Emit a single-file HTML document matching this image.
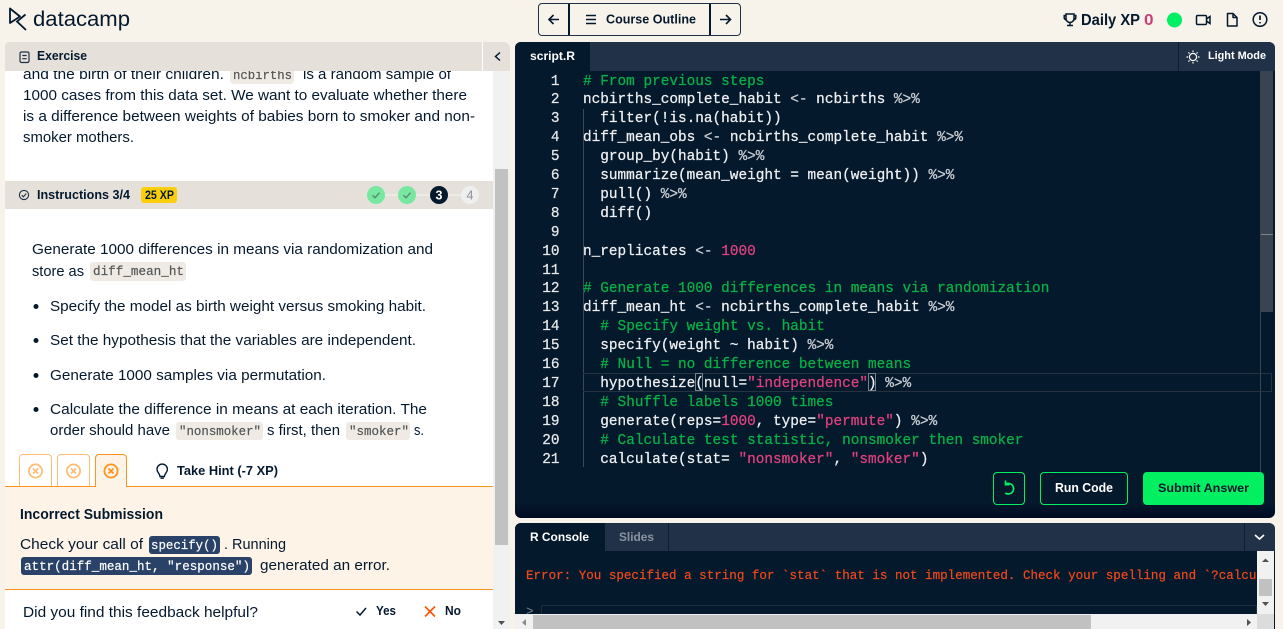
<!DOCTYPE html>
<html lang="en"><head><meta charset="utf-8"><title>DataCamp exercise</title>
<style>
html,body{margin:0;padding:0;width:1283px;height:629px;overflow:hidden;background:#f7f3eb}
body{position:relative;font-family:"Liberation Sans",sans-serif}
.b{position:absolute;box-sizing:border-box}
svg.o{position:absolute;left:0;top:0}
text{font-family:"Liberation Sans",sans-serif;fill:#05192d;font-size:15px}
text.h{font-weight:700;font-size:12.5px}
text.m{font-family:"Liberation Mono",monospace;font-size:12.5px;stroke-width:.2px}
pre{position:absolute;margin:0;font-family:"Liberation Mono",monospace}
.c{color:#06b045}.s{color:#e0417f}.o2{color:#c9ced3}
#code{left:583px;top:72.5px;font-size:14.4px;line-height:18.9px;color:#eef0f2;-webkit-text-stroke:.25px}
#nums{left:530px;top:72.5px;width:29.5px;text-align:right;font-size:14.4px;line-height:18.9px;color:#e6e8ea;-webkit-text-stroke:.25px}
</style></head><body>

<!-- left panel -->
<div class="b" style="left:5px;top:42px;width:505px;height:587px;background:#fff;border-radius:4px 6px 0 0"></div>
<div class="b" style="left:5px;top:42px;width:477px;height:29px;background:#e5e1da;border-radius:4px 0 0 0"></div>
<div class="b" style="left:483px;top:42px;width:27px;height:29px;background:#e5e1da;border-radius:0 6px 0 0"></div>
<div class="b" style="left:493px;top:71px;width:17px;height:558px;background:#f1f1f1"></div>
<div class="b" style="left:495px;top:169px;width:13px;height:376px;background:#c1c1c1"></div>
<div class="b" style="left:5px;top:181px;width:488px;height:28px;background:#e5e1da"></div>
<div class="b" style="left:230px;top:71px;width:64px;height:13px;background:#efebe4;border-radius:0 0 4px 4px"></div>
<div class="b" style="left:90px;top:262px;width:96px;height:19px;background:#efebe4;border-radius:3px"></div>
<div class="b" style="left:176px;top:422px;width:87px;height:18px;background:#efebe4;border-radius:3px"></div>
<div class="b" style="left:346px;top:422px;width:64px;height:18px;background:#efebe4;border-radius:3px"></div>
<div class="b" style="left:141px;top:187px;width:36px;height:16px;background:#fcce0d;border-radius:3px"></div>
<!-- feedback -->
<div class="b" style="left:5px;top:486px;width:488px;height:104px;background:#fef3e7;border-top:1px solid #ff931e;border-bottom:1px solid #ff931e"></div>
<div class="b" style="left:19px;top:454px;width:33px;height:32px;background:#fff;border:1px solid #ffbd78;border-bottom:0;border-radius:4px 4px 0 0"></div>
<div class="b" style="left:57px;top:454px;width:33px;height:32px;background:#fff;border:1px solid #ffbd78;border-bottom:0;border-radius:4px 4px 0 0"></div>
<div class="b" style="left:95px;top:454px;width:32px;height:33px;background:#fef3e7;border:1px solid #ff931e;border-bottom:0;border-radius:4px 4px 0 0"></div>
<div class="b" style="left:149px;top:536px;width:71px;height:18px;background:#2a4268;border-radius:3px"></div>
<div class="b" style="left:21px;top:557px;width:231px;height:18px;background:#2a4268;border-radius:3px"></div>

<!-- nav -->
<div class="b" style="left:538px;top:3px;width:203px;height:33px;border:1.5px solid #213147;border-radius:4px"></div>
<div class="b" style="left:568px;top:4px;width:2px;height:31px;background:#05192d"></div>
<div class="b" style="left:709px;top:4px;width:2px;height:31px;background:#05192d"></div>

<!-- editor -->
<div class="b" style="left:515px;top:42px;width:760px;height:476px;background:linear-gradient(#05192d 0,#05192d 460px,#000a22 476px);border-radius:6px;overflow:hidden">
  <div class="b" style="left:0;top:0;width:760px;height:29px;background:#213147"></div>
  <div class="b" style="left:0;top:0;width:75px;height:29px;background:#05192d"></div>
  <div class="b" style="left:663px;top:0;width:1px;height:29px;background:#0d1f35"></div>
  <div class="b" style="left:745px;top:29px;width:1px;height:401px;background:#3a4653"></div>
  <div class="b" style="left:745px;top:29px;width:13px;height:241px;background:#3a4450"></div>
  <div class="b" style="left:746px;top:192px;width:12px;height:1px;background:#7c858d"></div>
  <div class="b" style="left:68px;top:67px;width:1px;height:358px;background:#3c4a57"></div>
  <div class="b" style="left:68px;top:331px;width:689px;height:19px;border:1px solid #26323f;border-left:0"></div>
  <div class="b" style="left:180px;top:331px;width:8px;height:18px;border:1px solid #77838d"></div>
  <div class="b" style="left:353px;top:331px;width:8px;height:18px;border:1px solid #77838d"></div>
</div>
<pre id="nums">1
2
3
4
5
6
7
8
9
10
11
12
13
14
15
16
17
18
19
20
21</pre>
<pre id="code"><span class="c"># From previous steps</span>
ncbirths_complete_habit <span class="o2">&lt;-</span> ncbirths <span class="o2">%&gt;%</span>
  filter(!is.na(habit))
diff_mean_obs <span class="o2">&lt;-</span> ncbirths_complete_habit <span class="o2">%&gt;%</span>
  group_by(habit) <span class="o2">%&gt;%</span>
  summarize(mean_weight = mean(weight)) <span class="o2">%&gt;%</span>
  pull() <span class="o2">%&gt;%</span>
  diff()

n_replicates <span class="o2">&lt;-</span> <span class="s">1000</span>

<span class="c"># Generate 1000 differences in means via randomization</span>
diff_mean_ht <span class="o2">&lt;-</span> ncbirths_complete_habit <span class="o2">%&gt;%</span>
  <span class="c"># Specify weight vs. habit</span>
  specify(weight ~ habit) <span class="o2">%&gt;%</span>
  <span class="c"># Null = no difference between means</span>
  hypothesize(null=<span class="s">"independence"</span>) <span class="o2">%&gt;%</span>
  <span class="c"># Shuffle labels 1000 times</span>
  generate(reps=<span class="s">1000</span>, type=<span class="s">"permute"</span>) <span class="o2">%&gt;%</span>
  <span class="c"># Calculate test statistic, nonsmoker then smoker</span>
  calculate(stat= <span class="s">"nonsmoker"</span>, <span class="s">"smoker"</span>)</pre>
<div class="b" style="left:993px;top:472px;width:32px;height:33px;border:1px solid #03ef62;border-radius:4px"></div>
<div class="b" style="left:1040px;top:472px;width:88px;height:33px;border:1px solid #03ef62;border-radius:4px"></div>
<div class="b" style="left:1143px;top:472px;width:121px;height:33px;background:#03ef62;border-radius:4px"></div>

<!-- console -->
<div class="b" style="left:515px;top:523px;width:760px;height:106px;background:#05192d;border-radius:6px 6px 0 0;overflow:hidden">
  <div class="b" style="left:0;top:0;width:760px;height:28px;background:#213147"></div>
  <div class="b" style="left:0;top:0;width:90px;height:28px;background:#05192d"></div>
  <div class="b" style="left:153px;top:0;width:1px;height:28px;background:#0d1f35"></div>
  <div class="b" style="left:729px;top:0;width:1px;height:28px;background:#0d1f35"></div>
  <div class="b" style="left:26px;top:82px;width:716px;height:10px;border:1px solid #1f2c3b"></div>
</div>
<div class="b" style="left:526px;top:567px;width:731px;height:18px;overflow:hidden"><pre style="left:0;top:0;font-size:12.56px;line-height:18px;color:#f0491a;-webkit-text-stroke:.2px">Error: You specified a string for `stat` that is not implemented. Check your spelling and `?calculate`</pre></div>
<div class="b" style="left:1257px;top:551px;width:17px;height:63px;background:#f1f1f1"></div>
<div class="b" style="left:1259px;top:579px;width:13px;height:17px;background:#c1c1c1"></div>
<div class="b" style="left:515px;top:614px;width:742px;height:15px;background:#f1f1f1"></div>
<div class="b" style="left:533px;top:615px;width:558px;height:14px;background:#c1c1c1"></div>
<div class="b" style="left:1257px;top:614px;width:17px;height:15px;background:#dcdcdc"></div>

<svg class="o" width="1283" height="629" viewBox="0 0 1283 629" xmlns="http://www.w3.org/2000/svg">
 <!-- logo -->
 <g fill="none" stroke="#05192d" stroke-width="1.8">
  <path d="M10 8.5V23L20 16.5Z" stroke-linejoin="round"/>
  <path d="M25.5 14.5L17 21.5L26 30"/>
 </g>
 <text x="33" y="26" textLength="97" lengthAdjust="spacingAndGlyphs" style="font-size:21px;fill:#05192d">datacamp</text>

 <!-- nav icons -->
 <g fill="none" stroke="#05192d" stroke-width="1.6">
  <path d="M559 19.5H549M553.5 15L549 19.5L553.5 24"/>
  <path d="M586 15.5H596M586 19.5H596M586 23.5H596" stroke-width="1.4"/>
  <path d="M720 19.5H730.5M726 15L730.5 19.5L726 24"/>
 </g>
 <text class="h" x="606" y="23.5" textLength="90" lengthAdjust="spacingAndGlyphs">Course Outline</text>

 <!-- top right -->
 <g fill="none" stroke="#05192d" stroke-width="1.5">
  <path d="M1066 14H1074V18.5A4 4 0 0 1 1066 18.5ZM1066 15.5H1064.2V17A2.5 2.5 0 0 0 1066.6 20M1074 15.5H1075.8V17A2.5 2.5 0 0 1 1073.4 20M1070 22.5V25M1067 25.5H1073"/>
  <rect x="1196.5" y="15.5" width="10" height="9" rx="1.2"/>
  <path d="M1206.5 19L1210 16.5V23.5L1206.5 21"/>
  <path d="M1227.5 13.5H1233L1237 17.5V26H1227.5ZM1233 13.5V17.5H1237" stroke-linejoin="round"/>
  <circle cx="1260" cy="19.5" r="6.8"/>
 </g>
 <path d="M1260 15.5V20M1260 22V23.4" stroke="#05192d" stroke-width="1.7" fill="none"/>
 <text x="1081" y="25" textLength="59" lengthAdjust="spacingAndGlyphs" style="font-size:15.5px;font-weight:700">Daily XP</text>
 <text x="1144" y="25" textLength="9.5" lengthAdjust="spacingAndGlyphs" style="font-size:15.5px;font-weight:700;fill:#c83f78">0</text>
 <circle cx="1174.5" cy="20" r="7.5" fill="#03ef62"/>

 <!-- exercise header -->
 <g fill="none" stroke="#213147" stroke-width="1.2">
  <rect x="20" y="52" width="9" height="10.5" rx="1.5"/>
  <path d="M22.3 55.5H26.7M22.3 58.7H26.7"/>
 </g>
 <text class="h" x="37" y="60" textLength="50" lengthAdjust="spacingAndGlyphs">Exercise</text>
 <path d="M500 52.5L495.5 56.5L500 60.5" fill="none" stroke="#05192d" stroke-width="1.5"/>

 <!-- exercise text (first line clipped) -->
 <svg x="0" y="71" width="493" height="30" overflow="hidden">
  <text x="23" y="8" textLength="201" lengthAdjust="spacingAndGlyphs">and the birth of their children.</text>
  <text class="m" x="233" y="8" textLength="59" lengthAdjust="spacingAndGlyphs" style="fill:#555;stroke:#555">ncbirths</text>
  <text x="303" y="8" textLength="148" lengthAdjust="spacingAndGlyphs">is a random sample of</text>
 </svg>
 <text x="23" y="100" textLength="444" lengthAdjust="spacingAndGlyphs">1000 cases from this data set. We want to evaluate whether there</text>
 <text x="23" y="121" textLength="452" lengthAdjust="spacingAndGlyphs">is a difference between weights of babies born to smoker and non-</text>
 <text x="23" y="142" textLength="111" lengthAdjust="spacingAndGlyphs">smoker mothers.</text>

 <!-- instructions header -->
 <circle cx="24" cy="195" r="4.6" fill="none" stroke="#213147" stroke-width="1.1"/>
 <path d="M21.8 195.2L23.4 196.8L26.2 193.6" fill="none" stroke="#213147" stroke-width="1.1"/>
 <text class="h" x="37" y="199" textLength="93" lengthAdjust="spacingAndGlyphs">Instructions 3/4</text>
 <text class="h" x="145" y="199" textLength="29" lengthAdjust="spacingAndGlyphs" style="font-size:11.5px">25 XP</text>
 <path d="M384 195H461" stroke="#f3f1ec" stroke-width="1.2"/>
 <circle cx="376" cy="195" r="9" fill="#76e8a0"/>
 <circle cx="407" cy="195" r="9" fill="#76e8a0"/>
 <circle cx="439" cy="195" r="9" fill="#05192d"/>
 <circle cx="470" cy="195" r="9" fill="#efefef"/>
 <path d="M372.5 195.2L375 197.7L379.5 192.7M403.5 195.2L406 197.7L410.5 192.7" fill="none" stroke="#5a8a72" stroke-width="1.4"/>
 <text x="439" y="199.5" text-anchor="middle" style="font-size:12.5px;font-weight:700;fill:#fff">3</text>
 <text x="470" y="199.5" text-anchor="middle" style="font-size:12.5px;fill:#8c8f94">4</text>

 <!-- instructions -->
 <text x="32" y="254" textLength="401" lengthAdjust="spacingAndGlyphs">Generate 1000 differences in means via randomization and</text>
 <text x="32" y="276" textLength="52" lengthAdjust="spacingAndGlyphs">store as</text>
 <text class="m" x="93" y="275" textLength="91" lengthAdjust="spacingAndGlyphs" style="fill:#555;stroke:#555">diff_mean_ht</text>
 <g fill="#05192d"><circle cx="36" cy="306.5" r="2.5"/><circle cx="36" cy="340.5" r="2.5"/><circle cx="36" cy="375.5" r="2.5"/><circle cx="36" cy="409.5" r="2.5"/></g>
 <text x="50" y="311" textLength="376" lengthAdjust="spacingAndGlyphs">Specify the model as birth weight versus smoking habit.</text>
 <text x="50" y="345" textLength="366" lengthAdjust="spacingAndGlyphs">Set the hypothesis that the variables are independent.</text>
 <text x="50" y="380" textLength="276" lengthAdjust="spacingAndGlyphs">Generate 1000 samples via permutation.</text>
 <text x="50" y="414" textLength="377" lengthAdjust="spacingAndGlyphs">Calculate the difference in means at each iteration. The</text>
 <text x="50" y="435" textLength="120" lengthAdjust="spacingAndGlyphs">order should have</text>
 <text class="m" x="179" y="435" textLength="82" lengthAdjust="spacingAndGlyphs" style="fill:#555;stroke:#555">"nonsmoker"</text>
 <text x="267" y="435" textLength="73" lengthAdjust="spacingAndGlyphs">s first, then</text>
 <text class="m" x="349" y="435" textLength="60" lengthAdjust="spacingAndGlyphs" style="fill:#555;stroke:#555">"smoker"</text>
 <text x="414" y="435" textLength="10" lengthAdjust="spacingAndGlyphs">s.</text>

 <!-- attempt tabs -->
 <g fill="none" stroke="#ffbd78" stroke-width="1.8">
  <circle cx="35.5" cy="471" r="6.6"/><path d="M33 468.5L38 473.5M38 468.5L33 473.5"/>
  <circle cx="73.5" cy="471" r="6.6"/><path d="M71 468.5L76 473.5M76 468.5L71 473.5"/>
 </g>
 <g fill="none" stroke="#ff931e" stroke-width="1.8">
  <circle cx="111" cy="471" r="6.6"/><path d="M108.5 468.5L113.5 473.5M113.5 468.5L108.5 473.5"/>
 </g>
 <!-- hint -->
 <path d="M160 476.5C160 473.5 157 472.8 157 469.3A5.2 5.2 0 0 1 167.4 469.3C167.4 472.8 164.4 473.5 164.4 476.5ZM160.5 478.2H163.9" fill="none" stroke="#05192d" stroke-width="1.4"/>
 <text class="h" x="177" y="475" textLength="101" lengthAdjust="spacingAndGlyphs">Take Hint (-7 XP)</text>

 <!-- feedback -->
 <text x="20" y="519" textLength="143" lengthAdjust="spacingAndGlyphs" style="font-size:14.5px;font-weight:700">Incorrect Submission</text>
 <text x="20" y="549" textLength="123" lengthAdjust="spacingAndGlyphs">Check your call of</text>
 <text class="m" x="151" y="549" textLength="67" lengthAdjust="spacingAndGlyphs" style="fill:#fff;stroke:#fff">specify()</text>
 <text x="224" y="549" textLength="62" lengthAdjust="spacingAndGlyphs">. Running</text>
 <text class="m" x="24" y="570" textLength="226" lengthAdjust="spacingAndGlyphs" style="fill:#fff;stroke:#fff">attr(diff_mean_ht, "response")</text>
 <text x="260" y="570" textLength="130" lengthAdjust="spacingAndGlyphs">generated an error.</text>

 <!-- helpful -->
 <text x="23" y="617" textLength="235" lengthAdjust="spacingAndGlyphs">Did you find this feedback helpful?</text>
 <path d="M356.5 611.5L360 615L366 608" fill="none" stroke="#05192d" stroke-width="1.5"/>
 <text class="h" x="376" y="615" textLength="20" lengthAdjust="spacingAndGlyphs">Yes</text>
 <path d="M425 606.5L435 616.5M435 606.5L425 616.5" fill="none" stroke="#ff5400" stroke-width="1.6"/>
 <text class="h" x="445" y="615" textLength="16" lengthAdjust="spacingAndGlyphs">No</text>
 <path d="M498 621H505L501.5 625Z" fill="#505050"/>

 <!-- editor top labels -->
 <text class="h" x="530" y="60" textLength="45" lengthAdjust="spacingAndGlyphs" style="fill:#fff;font-size:12px">script.R</text>
 <g fill="none" stroke="#fff" stroke-width="1.2">
  <circle cx="1193" cy="57" r="3.6"/>
  <path d="M1193 50.5V52M1193 62V63.5M1186.5 57H1188M1198 57H1199.5M1188.4 52.4L1189.5 53.5M1196.5 60.5L1197.6 61.6M1197.6 52.4L1196.5 53.5M1189.5 60.5L1188.4 61.6"/>
 </g>
 <text class="h" x="1208" y="59" textLength="58" lengthAdjust="spacingAndGlyphs" style="fill:#fff;font-size:11px">Light Mode</text>

 <!-- buttons -->
 <path d="M1005.5 484.2A5.3 5.3 0 1 1 1005.3 493M1005.5 480.5V484.7H1009.6" fill="none" stroke="#03ef62" stroke-width="1.7"/>
 <text class="h" x="1055" y="492" textLength="58" lengthAdjust="spacingAndGlyphs" style="fill:#fff">Run Code</text>
 <text class="h" x="1158" y="492" textLength="91" lengthAdjust="spacingAndGlyphs" style="font-size:12px">Submit Answer</text>

 <!-- console labels -->
 <text class="h" x="530" y="541" textLength="59" lengthAdjust="spacingAndGlyphs" style="fill:#fff;font-size:12px">R Console</text>
 <text class="h" x="619" y="541" textLength="35" lengthAdjust="spacingAndGlyphs" style="fill:#8a93a0;font-size:12px">Slides</text>
 <path d="M1255 535L1259.5 539L1264 535" fill="none" stroke="#fff" stroke-width="1.6"/>
 <text class="m" x="526" y="615" style="fill:#7d8791">&gt;</text>
 <path d="M1262 562H1269L1265.5 558.5Z" fill="#505050"/>
 <path d="M1262 602H1269L1265.5 606Z" fill="#505050"/>
 <path d="M526 619V626L522 622.5Z" fill="#8a8a8a"/>
 <path d="M1247 619V626L1251 622.5Z" fill="#505050"/>
</svg>
<div class="b" style="left:515px;top:614px;width:742px;height:1px;background:#f1f1f1"></div>
</body></html>
